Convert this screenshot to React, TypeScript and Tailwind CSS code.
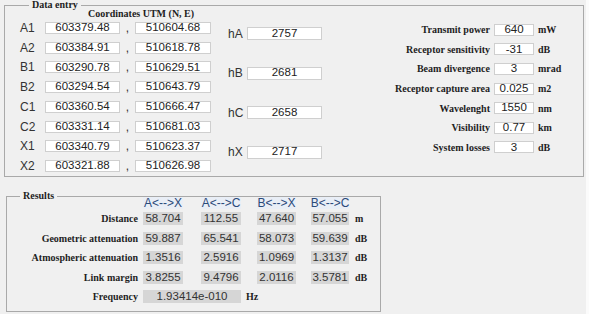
import React from 'react';

const coords = [
    { id: 'A1', n: '603379.48', e: '510604.68' },
    { id: 'A2', n: '603384.91', e: '510618.78' },
    { id: 'B1', n: '603290.78', e: '510629.51' },
    { id: 'B2', n: '603294.54', e: '510643.79' },
    { id: 'C1', n: '603360.54', e: '510666.47' },
    { id: 'C2', n: '603331.14', e: '510681.03' },
    { id: 'X1', n: '603340.79', e: '510623.37' },
    { id: 'X2', n: '603321.88', e: '510626.98' },
];

const heights = [
    { id: 'hA', v: '2757' },
    { id: 'hB', v: '2681' },
    { id: 'hC', v: '2658' },
    { id: 'hX', v: '2717' },
];

const params = [
    { label: 'Transmit power', v: '640', unit: 'mW' },
    { label: 'Receptor sensitivity', v: '-31', unit: 'dB' },
    { label: 'Beam divergence', v: '3', unit: 'mrad' },
    { label: 'Receptor capture area', v: '0.025', unit: 'm2' },
    { label: 'Wavelenght', v: '1550', unit: 'nm' },
    { label: 'Visibility', v: '0.77', unit: 'km' },
    { label: 'System losses', v: '3', unit: 'dB' },
];

const results = [
    { label: 'Distance', vals: ['58.704', '112.55', '47.640', '57.055'], unit: 'm' },
    { label: 'Geometric attenuation', vals: ['59.887', '65.541', '58.073', '59.639'], unit: 'dB' },
    { label: 'Atmospheric attenuation', vals: ['1.3516', '2.5916', '1.0969', '1.3137'], unit: 'dB' },
    { label: 'Link margin', vals: ['3.8255', '9.4796', '2.0116', '3.5781'], unit: 'dB' },
];

const serif = "font-['Liberation_Serif',serif] font-bold text-[10px] text-[#1e1e1e]";
const sans = "font-['Liberation_Sans',Arial,sans-serif]";
const inputBox = `h-[12px] bg-white border border-[#cfcfcf] flex items-center justify-center text-[11.5px] leading-none text-[#222] ${sans}`;
const resBox = `h-[13px] bg-[#d6d6d6] flex items-center justify-center text-[11.5px] leading-none text-[#333] ${sans}`;
const colW = ['w-[40px]', 'w-[40px] ml-[18px]', 'w-[39px] ml-[16px]', 'w-[38px] ml-[15px]'];

const App = () => {
    return (
        <div className="w-[589px] h-[314px] bg-[#f0f0f0] overflow-hidden flex">
            <div className="w-[586px] pt-[5px] pl-[4px]">
                {/* Data entry */}
                <div className="relative w-[580px] h-[172px] border border-[#a9a9a9] flex">
                    <span className={`absolute left-[24px] top-[-7px] px-[3px] bg-[#f0f0f0] leading-[12px] ${serif}`}>Data entry</span>

                    <div className="flex flex-col pt-[3px]">
                        <div className={`h-[9px] pl-[83px] leading-[9px] whitespace-nowrap ${serif}`}>Coordinates UTM (N, E)</div>
                        {coords.map(c => (
                            <div key={c.id} className="h-[19.8px] flex items-center pl-[15px]">
                                <span className={`w-[25px] text-[12px] text-[#333] ${sans}`}>{c.id}</span>
                                <div className={`w-[75px] ${inputBox}`}>{c.n}</div>
                                <span className={`w-[15px] text-center text-[12px] text-[#333] ${sans}`}>,</span>
                                <div className={`w-[76px] ${inputBox}`}>{c.e}</div>
                            </div>
                        ))}
                    </div>

                    <div className="flex flex-col pt-[21px] gap-[26.5px] ml-[17px]">
                        {heights.map(h => (
                            <div key={h.id} className="h-[13px] flex items-center">
                                <span className={`w-[19px] text-[12px] text-[#333] ${sans}`}>{h.id}</span>
                                <div className={`w-[75px] !h-[13px] ${inputBox}`}>{h.v}</div>
                            </div>
                        ))}
                    </div>

                    <div className="flex flex-col pt-[14px] ml-[58px]">
                        {params.map(p => (
                            <div key={p.label} className="h-[19.6px] flex items-center">
                                <span className={`w-[110px] text-right whitespace-nowrap ${serif}`}>{p.label}</span>
                                <div className={`w-[40px] ml-[4px] ${inputBox}`}>{p.v}</div>
                                <span className={`ml-[4px] ${serif} text-[9px]`}>{p.unit}</span>
                            </div>
                        ))}
                    </div>
                </div>

                {/* Results */}
                <div className="relative mt-[19px] ml-[2px] w-[375px] h-[116px] border border-[#a9a9a9] flex flex-col">
                    <span className={`absolute left-[13px] top-[-7px] px-[3px] bg-[#f0f0f0] leading-[12px] ${serif}`}>Results</span>

                    <div className="h-[12px] flex items-center pl-[136px]">
                        {['A<-->X', 'A<-->C', 'B<-->X', 'B<-->C'].map((h, i) => (
                            <span key={h} className={`${colW[i]} h-[12px] bg-[#e9eef6] flex justify-center whitespace-nowrap text-[12px] leading-[12px] text-[#2b4a7a] ${sans}`}>{h}</span>
                        ))}
                    </div>

                    {results.map(r => (
                        <div key={r.label} className="h-[19.5px] flex items-center">
                            <span className={`w-[131px] text-right whitespace-nowrap ${serif}`}>{r.label}</span>
                            <div className="flex ml-[5px]">
                                {r.vals.map((v, i) => (
                                    <div key={i} className={`${colW[i]} ${resBox}`}>{v}</div>
                                ))}
                            </div>
                            <span className={`ml-[6px] ${serif} text-[8px]`}>{r.unit}</span>
                        </div>
                    ))}

                    <div className="h-[19.5px] flex items-center">
                        <span className={`w-[131px] text-right ${serif}`}>Frequency</span>
                        <div className={`w-[98px] ml-[5px] ${resBox}`}>1.93414e-010</div>
                        <span className={`ml-[5px] ${serif} text-[8px]`}>Hz</span>
                    </div>
                </div>
            </div>
            <div className="flex-1 bg-[#fbfbfb]" />
        </div>
    );
};

export default App;
